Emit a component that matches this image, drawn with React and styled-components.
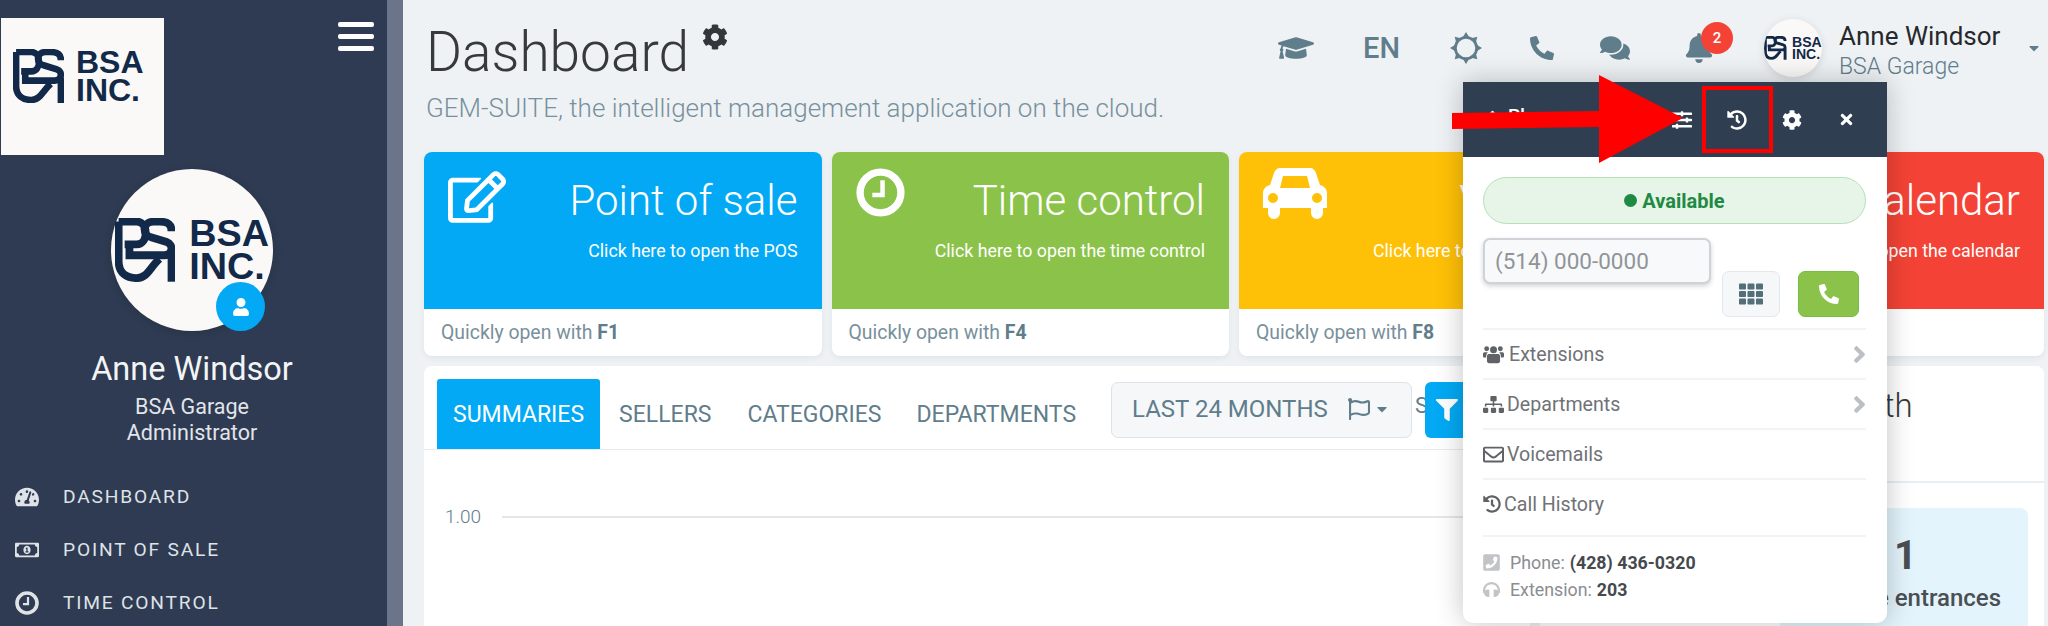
import React from 'react'
import styled, { createGlobalStyle } from 'styled-components'
import {
  FaAngleRight, FaBell, FaCalendarAlt, FaCaretDown, FaCaretUp, FaCog, FaComments, FaFilter,
  FaGraduationCap, FaHeadphones, FaHistory, FaPhone, FaPhoneSquare, FaRegEdit, FaRegEnvelope,
  FaRegFlag, FaRegMoneyBillAlt, FaSitemap, FaSlidersH, FaTachometerAlt, FaTh, FaTimes, FaUser,
} from 'react-icons/fa'

const GlobalStyle = createGlobalStyle`
  html, body { margin: 0; padding: 0; background: #eef2f5; }
  * { box-sizing: border-box; }
  body { font-family: Roboto, "Liberation Sans", sans-serif; }
`

const Page = styled.div`
  position: relative;
  display: flex;
  width: 2048px;
  height: 626px;
  overflow: hidden;
  background: #eef2f5;
`

const Sidebar = styled.aside`
  width: 387px;
  flex: none;
  background: #2e3b52;
  color: #fff;
`

const SideTop = styled.div`
  display: flex;
  justify-content: space-between;
  align-items: flex-start;
  padding: 18px 13px 0 1px;
`

const LogoBox = styled.div`
  width: 163px;
  height: 137px;
  background: #fbf9f7;
  padding: 30px 0 0 12px;
`

const Burger = styled.div`
  width: 36px;
  height: 29px;
  margin-top: 4px;
  display: flex;
  flex-direction: column;
  justify-content: space-between;

  span {
    height: 5px;
    border-radius: 2px;
    background: #fff;
  }
`

const LogoWrap = styled.div`
  display: flex;
  align-items: center;
  gap: ${p => p.$s * 12}px;
  color: #12294a;

  svg {
    width: ${p => p.$s * 51}px;
    height: ${p => p.$s * 54}px;
    flex: none;
  }

  div {
    font-family: "Liberation Sans", Arial, sans-serif;
    font-weight: 700;
    font-size: ${p => p.$s * 32}px;
    line-height: ${p => p.$s * 28}px;
  }
`

const Logo = ({ s = 1 }) => (
  <LogoWrap $s={s}>
    <svg viewBox="0 0 50 53" fill="none" stroke="#12294a" strokeWidth="6.5">
      <path d="M3 3H18C28 3 28 22 18 22H8" />
      <path d="M3 3V36C3 46 10 50 18 50C27 50 29 41 37 34" />
      <path d="M47 11C47 4 42 3 37 3H32C23 3 22 14 30 16L43 20C49 22 48 31 41 31H12V24" />
      <path d="M47 28V53" />
    </svg>
    <div>BSA<br />INC.</div>
  </LogoWrap>
)

const ClockIcon = () => (
  <svg width="1em" height="1em" viewBox="0 0 24 24" fill="none" stroke="currentColor">
    <circle cx="12" cy="12" r="10" strokeWidth="3.6" />
    <path d="M13 6V13.2H8" strokeWidth="2.2" />
  </svg>
)

const SunIcon = () => (
  <svg width="1em" height="1em" viewBox="0 0 30 30" fill="currentColor">
    <circle cx="15" cy="15" r="10" fill="none" stroke="currentColor" strokeWidth="2.6" />
    {[0, 45, 90, 135, 180, 225, 270, 315].map(a => (
      <polygon key={a} points="15,0 18,5 12,5" transform={`rotate(${a} 15 15)`} />
    ))}
  </svg>
)

const CarIcon = () => (
  <svg width="64" height="51" viewBox="0 0 64 51" fill="currentColor">
    <path
      fillRule="evenodd"
      d="M17 0H47C50 0 52 2 53 5L57 17C61 18 64 21 64 25V40H60V45A6 6 0 0 1 48 45V40H17V45A6 6 0 0 1 5 45V40H0V25C0 21 3 18 7 17L11 5C12 2 14 0 17 0ZM20 8L17 20H47L44 8ZM10 25A5 5 0 1 0 10 35A5 5 0 1 0 10 25ZM54 25A5 5 0 1 0 54 35A5 5 0 1 0 54 25Z"
    />
  </svg>
)

const PeopleIcon = () => (
  <svg width="1em" height="1em" viewBox="0 0 24 24" fill="currentColor">
    <circle cx="12" cy="6.5" r="4" />
    <circle cx="4.2" cy="5.5" r="2.8" />
    <circle cx="19.8" cy="5.5" r="2.8" />
    <path d="M6.5 11.5H17.5C19 11.5 19.5 13 19.5 15V19.5C19.5 21 18.5 22 17 22H7C5.5 22 4.5 21 4.5 19.5V15C4.5 13 5 11.5 6.5 11.5Z" />
    <path d="M1.8 9.5H5.6C4.4 10.5 3.6 12 3.5 15.5H1.5C.5 15.5 0 15 0 14V11.5C0 10.3.6 9.5 1.8 9.5Z" />
    <path d="M22.2 9.5H18.4C19.6 10.5 20.4 12 20.5 15.5H22.5C23.5 15.5 24 15 24 14V11.5C24 10.3 23.4 9.5 22.2 9.5Z" />
  </svg>
)

const Profile = styled.div`
  display: flex;
  flex-direction: column;
  align-items: center;
  margin-top: 14px;
  padding-right: 3px;
`

const AvatarBig = styled.div`
  position: relative;
  width: 162px;
  height: 162px;
  border-radius: 50%;
  background: #fbf9f7;
  display: flex;
  align-items: center;
  justify-content: center;
  box-shadow: 0 2px 10px rgba(0, 0, 0, .15);
  margin-bottom: 18px;
`

const AvatarBadge = styled.span`
  position: absolute;
  right: 8px;
  bottom: 0;
  width: 49px;
  height: 49px;
  border-radius: 50%;
  background: #03a9f4;
  display: flex;
  align-items: center;
  justify-content: center;
  font-size: 18px;
  color: #fff;
`

const ProfileName = styled.div`
  font-size: 32.5px;
  line-height: 40px;
  color: #f3f4f6;
`

const ProfileRole = styled.div`
  font-size: 21.5px;
  line-height: 26px;
  color: #e2e5ea;
  text-align: center;
  margin-top: 5px;
`

const SideMenu = styled.nav`
  margin-top: 24px;
  padding-left: 15px;
`

const SideItem = styled.div`
  display: flex;
  align-items: center;
  height: 53px;
  font-size: 19.2px;
  letter-spacing: 1.8px;
  color: #dfe2e7;

  svg {
    width: 24px;
    font-size: 24px;
    margin-right: 24px;
    flex: none;
  }
`

const ScrollTrack = styled.div`
  width: 16px;
  flex: none;
  background: #6b7488;
`

const Main = styled.main`
  flex: 1;
  min-width: 0;
  padding: 0 4px 0 21px;
`

const TopBar = styled.header`
  display: flex;
  justify-content: space-between;
  height: 152px;
`

const TitleBlock = styled.div`
  padding: 19px 0 0 2px;
`

const Title = styled.h1`
  display: flex;
  margin: 0;
  font-size: 55px;
  line-height: 66px;
  font-weight: 300;
  color: #37393d;

  svg {
    font-size: 26px;
    margin: 5px 0 0 13px;
    color: #33363a;
  }
`

const Subtitle = styled.div`
  margin-top: 7px;
  font-size: 26px;
  line-height: 32px;
  font-weight: 300;
  color: #78909c;
`

const Nav = styled.div`
  display: flex;
  align-items: center;
  height: 96px;
  color: #607d8b;
`

const NavIcon = styled.span`
  position: relative;
  display: flex;
  justify-content: center;
  margin-left: ${p => p.$ml}px;
  font-size: ${p => p.$size}px;
  font-weight: 500;
  line-height: 1;
`

const NavBadge = styled.span`
  position: absolute;
  top: -11px;
  left: 17px;
  width: 32px;
  height: 32px;
  border-radius: 50%;
  background: #f44336;
  color: #fff;
  font-size: 15px;
  font-weight: 500;
  display: flex;
  align-items: center;
  justify-content: center;
`

const AvatarSmall = styled.div`
  width: 58px;
  height: 58px;
  margin-left: 50px;
  border-radius: 50%;
  background: #fbf9f7;
  display: flex;
  align-items: center;
  justify-content: center;
  overflow: hidden;
  box-shadow: 0 2px 8px rgba(0, 0, 0, .12);
`

const UserBlock = styled.div`
  width: 187px;
  margin-left: 17px;
  padding-top: 5px;
`

const UserName = styled.div`
  font-size: 26px;
  line-height: 30px;
  color: #26282b;
`

const UserOrg = styled.div`
  font-size: 23px;
  font-weight: 300;
  line-height: 28px;
  margin-top: 2px;
  color: #607d8b;
`

const UserCaret = styled.span`
  display: flex;
  font-size: 16px;
  margin-right: 2px;
`

const Cards = styled.section`
  display: grid;
  grid-template-columns: repeat(4, 1fr);
  gap: 10px;
`

const Card = styled.article`
  height: 204px;
  border-radius: 8px;
  overflow: hidden;
  background: #fff;
  box-shadow: 0 2px 6px rgba(0, 0, 0, .06);
`

const CardTop = styled.div`
  position: relative;
  height: 157px;
  background: ${p => p.$color};
  color: #fff;
  text-align: right;
  padding: 24px 24px 0 0;
`

const CardIcon = styled.span`
  position: absolute;
  left: 24px;
  top: 16px;
  display: flex;
  font-size: ${p => p.$size || 56}px;
`

const CardTitle = styled.div`
  font-size: 42px;
  line-height: 50px;
  font-weight: 300;
`

const CardHint = styled.div`
  margin-top: 14px;
  font-size: 17.8px;
  line-height: 22px;
`

const CardFoot = styled.div`
  padding: 0 17px;
  line-height: 47px;
  font-size: 19.4px;
  color: #78909c;

  b {
    font-weight: 700;
    color: #607d8b;
  }
`

const Panels = styled.section`
  display: grid;
  grid-template-columns: 1106px 1fr;
  gap: 10px;
  margin-top: 10px;
`

const Panel = styled.div`
  height: 300px;
  background: #fff;
  border-radius: 8px 8px 0 0;
`

const TabRow = styled.div`
  display: flex;
  align-items: flex-start;
  height: 84px;
  padding: 13px 0 0 13px;
  border-bottom: 1px solid #e4ebf0;
`

const Tab = styled.div`
  height: 70px;
  padding: 1px ${p => p.$pad}px 0;
  margin-right: ${p => p.$mr || 0}px;
  border-radius: 3px 3px 0 0;
  background: ${p => (p.$active ? '#03a9f4' : 'transparent')};
  color: ${p => (p.$active ? '#fff' : '#607d8b')};
  font-size: 23px;
  line-height: 70px;
`

const RangeSelect = styled.div`
  display: flex;
  align-items: center;
  width: 301px;
  height: 56px;
  margin-top: 3px;
  padding: 0 0 2px 20px;
  border: 1px solid #dde3e8;
  border-radius: 7px;
  background: #f5f7f9;
  color: #607d8b;
  font-size: 24px;
  white-space: nowrap;

  svg:first-of-type {
    margin-left: 20px;
    font-size: 22px;
  }

  svg:last-of-type {
    font-size: 16px;
    margin-left: 4px;
  }
`

const FilterLabel = styled.span`
  margin: 14px 0 0 3px;
  width: 10px;
  overflow: hidden;
  color: #607d8b;
  font-size: 22px;
`

const FilterButton = styled.div`
  width: 44px;
  height: 56px;
  margin-top: 3px;
  border-radius: 6px 0 0 6px;
  background: #03a9f4;
  color: #fff;
  display: flex;
  align-items: center;
  justify-content: center;
  font-size: 22px;
`

const Chart = styled.div`
  display: flex;
  align-items: center;
  gap: 21px;
  padding: 56px 0 0 21px;
  color: #607d8b;
  font-size: 19px;
  font-weight: 300;
  line-height: 22px;

  i {
    flex: 1;
    height: 2px;
    background: #e4e6e8;
  }
`

const PanelHead = styled.div`
  height: 117px;
  padding: 18px 0 0 208px;
  border-bottom: 2px solid #e8eef2;
  font-size: 33px;
  line-height: 44px;
  font-weight: 300;
  color: #37393d;
`

const StatRow = styled.div`
  display: flex;
  justify-content: flex-end;
  padding: 25px 16px 0;
`

const StatBox = styled.div`
  width: 248px;
  height: 140px;
  border-radius: 8px;
  background: #e3f4fc;
  text-align: center;
  color: #4b4e52;
  padding: 26px 0 0 3px;

  b {
    display: block;
    font-size: 40px;
    line-height: 44px;
    font-weight: 700;
  }

  span {
    display: block;
    margin-top: 5px;
    font-size: 24px;
    line-height: 30px;
    font-weight: 500;
  }
`

const Popup = styled.div`
  position: absolute;
  left: 1463px;
  top: 82px;
  width: 424px;
  height: 541px;
  background: #fff;
  border-radius: 0 0 10px 10px;
  box-shadow: 0 0 28px rgba(0, 0, 0, .24);
  color: #5b5e62;
`

const PopupHead = styled.div`
  display: flex;
  align-items: center;
  height: 75px;
  padding: 0 13px 0 20px;
  background: #2f3e50;
  color: #fff;
`

const PopupTitle = styled.div`
  flex: 1;
  display: flex;
  align-items: center;
  gap: 6px;
  margin-bottom: 8px;
  font-size: 19px;
  font-weight: 500;

  svg {
    margin-bottom: 5px;
  }
`

const HeadButton = styled.span`
  width: 55px;
  display: flex;
  justify-content: center;
  font-size: ${p => p.$size || 20}px;
`

const PopupBody = styled.div`
  padding: 20px 21px 0 20px;
`

const StatusPill = styled.div`
  display: flex;
  align-items: center;
  justify-content: center;
  gap: 5px;
  height: 47px;
  border: 1px solid #b5e0b8;
  border-radius: 24px;
  background: #e7f4e8;
  color: #1e8a44;
  font-size: 20px;
  font-weight: 700;

  i {
    width: 13px;
    height: 13px;
    border-radius: 50%;
    background: #1e8a44;
  }
`

const DialRow = styled.div`
  display: flex;
  align-items: flex-end;
  height: 79px;
  margin-top: 14px;
`

const PhoneInput = styled.div`
  align-self: flex-start;
  width: 228px;
  height: 46px;
  padding: 0 10px;
  border: 2px solid #cfd2d6;
  border-radius: 7px;
  background: #f8f9fb;
  box-shadow: 0 2px 5px rgba(0, 0, 0, .18);
  color: #909498;
  font-size: 22.5px;
  line-height: 42px;
`

const DialButton = styled.div`
  width: 58px;
  height: 46px;
  margin-left: 11px;
  border: 1px solid #e2e8ee;
  border-radius: 7px;
  background: #f5f7f9;
  color: #546e7a;
  font-size: 24px;
  display: flex;
  align-items: center;
  justify-content: center;
`

const CallButton = styled(DialButton)`
  width: 61px;
  margin-left: 18px;
  border-color: #76bd47;
  background: #8bc34a;
  color: #fff;
  font-size: 20px;
`

const MenuRows = styled.div`
  margin-top: 11px;
  border-bottom: 2px solid #f1f3f5;
`

const MenuRow = styled.div`
  display: flex;
  align-items: center;
  height: ${p => p.$h || 50}px;
  padding-bottom: ${p => (p.$h ? 7 : 0)}px;
  border-top: 2px solid #f1f3f5;
  font-size: 19.6px;
  color: #6f7276;

  svg:first-child {
    font-size: ${p => p.$icon || 21}px;
    margin-right: ${p => p.$gap ?? 3}px;
    color: #5f6266;
  }

  svg:nth-child(3) {
    margin-left: auto;
    margin-right: -7px;
    font-size: 27px;
    color: #bcc0c4;
  }
`

const InfoRows = styled.div`
  padding-top: 12px;
`

const InfoRow = styled.div`
  display: flex;
  align-items: center;
  height: 27px;
  font-size: 17.8px;
  color: #8a8d91;

  svg {
    width: 17px;
    font-size: 19px;
    color: #c2c4c7;
    margin-right: 10px;
  }

  b {
    margin-left: 5px;
    color: #46494d;
    font-weight: 700;
  }
`

const Arrow = styled.svg`
  position: absolute;
  left: 1452px;
  top: 75px;
`

const Highlight = styled.div`
  position: absolute;
  left: 1702px;
  top: 86px;
  width: 71px;
  height: 67px;
  border: 4px solid #f00;
`

const CARDS = [
  { color: '#03a9f4', icon: <FaRegEdit />, size: 58, title: 'Point of sale', hint: 'Click here to open the POS', key: 'F1' },
  { color: '#8bc34a', icon: <ClockIcon />, size: 49, title: 'Time control', hint: 'Click here to open the time control', key: 'F4' },
  { color: '#ffc107', icon: <CarIcon />, title: 'Vehicles', hint: 'Click here to open the vehicles', key: 'F8' },
  { color: '#f44336', icon: <FaCalendarAlt />, size: 50, title: 'Calendar', hint: 'Click here to open the calendar', key: 'F9' },
]

export default function App() {
  return (
    <Page>
      <GlobalStyle />
      <Sidebar>
        <SideTop>
          <LogoBox><Logo /></LogoBox>
          <Burger><span /><span /><span /></Burger>
        </SideTop>
        <Profile>
          <AvatarBig>
            <Logo s={1.18} />
            <AvatarBadge><FaUser /></AvatarBadge>
          </AvatarBig>
          <ProfileName>Anne Windsor</ProfileName>
          <ProfileRole>BSA Garage<br />Administrator</ProfileRole>
        </Profile>
        <SideMenu>
          <SideItem><FaTachometerAlt />DASHBOARD</SideItem>
          <SideItem><FaRegMoneyBillAlt />POINT OF SALE</SideItem>
          <SideItem><ClockIcon />TIME CONTROL</SideItem>
        </SideMenu>
      </Sidebar>
      <ScrollTrack />
      <Main>
        <TopBar>
          <TitleBlock>
            <Title>Dashboard<FaCog /></Title>
            <Subtitle>GEM-SUITE, the intelligent management application on the cloud.</Subtitle>
          </TitleBlock>
          <Nav>
            <NavIcon $ml={0} $size={36}><FaGraduationCap /></NavIcon>
            <NavIcon $ml={49} $size={29}>EN</NavIcon>
            <NavIcon $ml={50} $size={32}><SunIcon /></NavIcon>
            <NavIcon $ml={48} $size={24}><FaPhone style={{ transform: 'scaleX(-1)' }} /></NavIcon>
            <NavIcon $ml={46} $size={30}><FaComments /></NavIcon>
            <NavIcon $ml={54} $size={30}><FaBell /><NavBadge>2</NavBadge></NavIcon>
            <AvatarSmall><Logo s={0.44} /></AvatarSmall>
            <UserBlock>
              <UserName>Anne Windsor</UserName>
              <UserOrg>BSA Garage</UserOrg>
            </UserBlock>
            <UserCaret><FaCaretDown /></UserCaret>
          </Nav>
        </TopBar>
        <Cards>
          {CARDS.map(c => (
            <Card key={c.key}>
              <CardTop $color={c.color}>
                <CardIcon $size={c.size}>{c.icon}</CardIcon>
                <CardTitle>{c.title}</CardTitle>
                <CardHint>{c.hint}</CardHint>
              </CardTop>
              <CardFoot>Quickly open with <b>{c.key}</b></CardFoot>
            </Card>
          ))}
        </Cards>
        <Panels>
          <Panel>
            <TabRow>
              <Tab $active $pad={16}>SUMMARIES</Tab>
              <Tab $pad={19}>SELLERS</Tab>
              <Tab $pad={17}>CATEGORIES</Tab>
              <Tab $pad={18} $mr={17}>DEPARTMENTS</Tab>
              <RangeSelect>LAST 24 MONTHS<FaRegFlag /><FaCaretDown /></RangeSelect>
              <FilterLabel>S</FilterLabel>
              <FilterButton><FaFilter /></FilterButton>
            </TabRow>
            <Chart>1.00<i /></Chart>
          </Panel>
          <Panel>
            <PanelHead>This month</PanelHead>
            <StatRow>
              <StatBox><b>1</b><span>Vehicle entrances</span></StatBox>
            </StatRow>
          </Panel>
        </Panels>
      </Main>
      <Popup>
        <PopupHead>
          <PopupTitle><FaCaretUp />Phone</PopupTitle>
          <HeadButton><FaSlidersH /></HeadButton>
          <HeadButton><FaHistory /></HeadButton>
          <HeadButton><FaCog /></HeadButton>
          <HeadButton $size={17}><FaTimes /></HeadButton>
        </PopupHead>
        <PopupBody>
          <StatusPill><i />Available</StatusPill>
          <DialRow>
            <PhoneInput>(514) 000-0000</PhoneInput>
            <DialButton><FaTh /></DialButton>
            <CallButton><FaPhone style={{ transform: 'scaleX(-1)' }} /></CallButton>
          </DialRow>
          <MenuRows>
            <MenuRow $gap={5}><PeopleIcon /><span>Extensions</span><FaAngleRight /></MenuRow>
            <MenuRow><FaSitemap /><span>Departments</span><FaAngleRight /></MenuRow>
            <MenuRow><FaRegEnvelope /><span>Voicemails</span></MenuRow>
            <MenuRow $h={57} $icon={18}><FaHistory /><span>Call History</span></MenuRow>
          </MenuRows>
          <InfoRows>
            <InfoRow><FaPhoneSquare />Phone: <b>(428) 436-0320</b></InfoRow>
            <InfoRow><FaHeadphones />Extension: <b>203</b></InfoRow>
          </InfoRows>
        </PopupBody>
      </Popup>
      <Arrow width="231" height="88" viewBox="0 0 231 88">
        <polygon points="0,38 147,36 147,0 231,43 147,88 147,52 0,54" fill="#f00" />
      </Arrow>
      <Highlight />
    </Page>
  )
}
